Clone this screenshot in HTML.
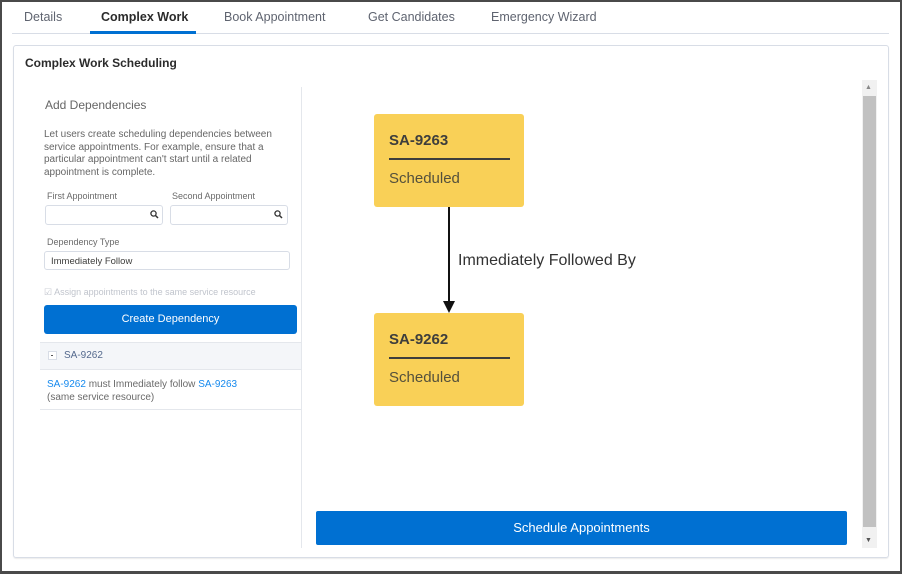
<!DOCTYPE html>
<html><head><meta charset="utf-8"><style>
*{box-sizing:border-box;margin:0;padding:0}
body{width:902px;height:574px;position:relative;background:#fff;font-family:"Liberation Sans",sans-serif;color:#3e3e3c;overflow:hidden}
.a{position:absolute}
.frame{left:0;top:0;width:902px;height:574px;border:2px solid #4a4a4a;border-bottom-width:3px;border-right-width:2px}
.tab{top:10px;font-size:12.5px;color:#5f6470}
.box{background:#f9d057;border-radius:3px;width:150px;height:93px}
.box .t{position:absolute;left:15px;top:18px;font-size:15px;font-weight:bold;color:#3e3e3c}
.box .l{position:absolute;left:15px;top:44px;width:121px;height:2px;background:#3e3e3c}
.box .s{position:absolute;left:15px;top:56px;font-size:15px;color:#54503c}
.inp{border:1px solid #d8dde6;border-radius:3px;background:#fff}
.lbl{font-size:9px;color:#6a6a6a}
a{color:#1589ee;text-decoration:none}
</style></head><body>
<div class="a frame"></div>
<div class="a tab" style="left:24px">Details</div>
<div class="a tab" style="left:101px;color:#2b2b2b;font-weight:bold">Complex Work</div>
<div class="a tab" style="left:224px">Book Appointment</div>
<div class="a tab" style="left:368px">Get Candidates</div>
<div class="a tab" style="left:491px">Emergency Wizard</div>
<div class="a" style="left:12px;top:33px;width:877px;height:1px;background:#d8dde6"></div>
<div class="a" style="left:90px;top:31px;width:106px;height:3px;background:#0070d2"></div>

<div class="a" style="left:13px;top:45px;width:876px;height:513px;border:1px solid #d8dde6;border-radius:3px;box-shadow:0 1px 1px rgba(0,0,0,.08)"></div>
<div class="a" style="left:25px;top:56px;font-size:12px;font-weight:bold;color:#2b2b2b">Complex Work Scheduling</div>
<div class="a" style="left:301px;top:87px;width:1px;height:461px;background:#e4e7ec"></div>

<div class="a" style="left:45px;top:98px;font-size:12px;color:#666">Add Dependencies</div>
<div class="a" style="left:44px;top:129px;width:250px;font-size:10px;line-height:12.5px;color:#666">Let users create scheduling dependencies between service appointments. For example, ensure that a particular appointment can't start until a related appointment is complete.</div>
<div class="a lbl" style="left:47px;top:191px">First Appointment</div>
<div class="a lbl" style="left:172px;top:191px">Second Appointment</div>
<div class="a inp" style="left:45px;top:205px;width:118px;height:20px"></div>
<svg class="a" style="left:150px;top:210px" width="9" height="9"><circle cx="3.5" cy="3.5" r="2.6" fill="none" stroke="#333" stroke-width="1.3"/><line x1="5.5" y1="5.5" x2="8" y2="8" stroke="#333" stroke-width="1.5"/></svg>
<div class="a inp" style="left:170px;top:205px;width:118px;height:20px"></div>
<svg class="a" style="left:274px;top:210px" width="9" height="9"><circle cx="3.5" cy="3.5" r="2.6" fill="none" stroke="#333" stroke-width="1.3"/><line x1="5.5" y1="5.5" x2="8" y2="8" stroke="#333" stroke-width="1.5"/></svg>
<div class="a lbl" style="left:47px;top:237px">Dependency Type</div>
<div class="a inp" style="left:44px;top:251px;width:246px;height:19px;font-size:9.5px;color:#3e3e3c;padding:4px 0 0 6px">Immediately Follow</div>
<div class="a" style="left:44px;top:287px;font-size:9px;color:#c0c4cc">&#9745; Assign appointments to the same service resource</div>
<div class="a" style="left:44px;top:305px;width:253px;height:29px;background:#0070d2;border-radius:3px;color:#fff;font-size:11px;text-align:center;line-height:29px">Create Dependency</div>
<div class="a" style="left:40px;top:342px;width:261px;height:28px;background:#f4f6f9;border-top:1px solid #e4e7ec;border-bottom:1px solid #e4e7ec"></div>
<div class="a" style="left:48px;top:351px;width:9px;height:9px;border:1px solid #d8dde6;background:#fff"></div>
<div class="a" style="left:51px;top:355px;width:2px;height:1px;background:#555"></div>
<div class="a" style="left:64px;top:350px;font-size:10px;color:#54698d">SA-9262</div>
<div class="a" style="left:47px;top:378px;font-size:10px;line-height:13px;color:#6a6a6a"><a>SA-9262</a> must Immediately follow <a>SA-9263</a><br>(same service resource)</div>
<div class="a" style="left:40px;top:409px;width:261px;height:1px;background:#e4e7ec"></div>

<div class="a box" style="left:374px;top:114px"><div class="t">SA-9263</div><div class="l"></div><div class="s">Scheduled</div></div>
<div class="a box" style="left:374px;top:313px"><div class="t">SA-9262</div><div class="l"></div><div class="s">Scheduled</div></div>
<svg class="a" style="left:440px;top:207px" width="20" height="106"><line x1="9" y1="0" x2="9" y2="94" stroke="#111" stroke-width="2"/><polygon points="3,94 15,94 9,106" fill="#111"/></svg>
<div class="a" style="left:458px;top:252px;font-size:16px;color:#333">Immediately Followed By</div>

<div class="a" style="left:316px;top:511px;width:531px;height:34px;background:#0070d2;border-radius:2px;color:#fff;font-size:13px;text-align:center;line-height:34px">Schedule Appointments</div>

<div class="a" style="left:862px;top:80px;width:15px;height:468px;background:#f1f1f1"></div>
<div class="a" style="left:863px;top:96px;width:13px;height:431px;background:#c1c1c1"></div>
<div class="a" style="left:865px;top:84px;font-size:7px;color:#888">&#9650;</div>
<div class="a" style="left:865px;top:537px;font-size:7px;color:#555">&#9660;</div>
</body></html>
